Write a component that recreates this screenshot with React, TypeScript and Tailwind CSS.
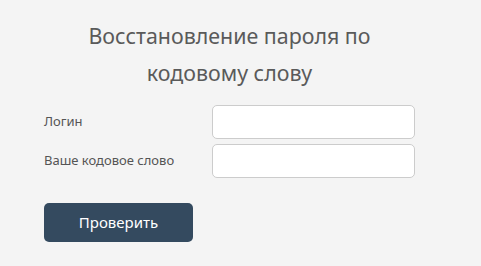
export default function App() {
  return (
    <div className="min-h-[266px] w-full bg-[#f4f4f4] font-['Noto_Sans',sans-serif] text-[#555]">
      <div className="ml-[44px] w-[371px] pt-[17px]">
        <h1 className="text-center text-[21.4px] leading-[37px] text-[#5a5a5a]">
          Восстановление пароля по
          <br />
          кодовому слову
        </h1>
        <form className="mt-[14px] flex flex-col gap-[5px]">
          <div className="flex items-center justify-between">
            <label className="text-[13px] text-[#555]">Логин</label>
            <input className="h-[34px] w-[203px] rounded-[5px] border border-[#ccc] bg-white px-2" />
          </div>
          <div className="flex items-center justify-between">
            <label className="text-[13px] text-[#555]">Ваше кодовое слово</label>
            <input className="h-[34px] w-[203px] rounded-[5px] border border-[#ccc] bg-white px-2" />
          </div>
          <button
            type="button"
            className="mt-[20px] h-[39px] w-[149px] rounded-[5px] bg-[#344a5f] text-[15px] text-white"
          >
            Проверить
          </button>
        </form>
      </div>
    </div>
  );
}
